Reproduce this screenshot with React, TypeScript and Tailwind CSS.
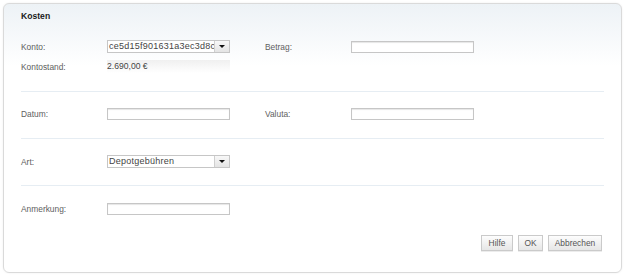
import React from "react";

const label = "w-[86px] shrink-0 text-[8.4px] leading-[12px] text-[#606060]";

function TextInput() {
  return (
    <div className="w-[123px] h-[12px] shrink-0 border border-[#c6c6c6] bg-white shadow-[inset_0_1px_1px_#e6e6e6]" />
  );
}

function Select({ value }: { value: string }) {
  return (
    <div className="flex w-[123px] h-[13px] shrink-0 border border-[#c6c6c6] bg-white">
      <div className="flex-1 overflow-hidden whitespace-nowrap pl-[1px] text-[9px] tracking-[0.25px] leading-[11px] text-[#444]">
        {value}
      </div>
      <div className="flex w-[15px] items-center justify-center border-l border-[#cfcfcf] bg-gradient-to-b from-[#f8f8f8] to-[#e4e4e4]">
        <div className="h-0 w-0 border-x-[3px] border-t-[3px] border-x-transparent border-t-[#111]" />
      </div>
    </div>
  );
}

function Btn({ children, w }: { children: React.ReactNode; w: string }) {
  return (
    <button
      className={`${w} h-[16px] border border-[#cacaca] bg-gradient-to-b from-[#fdfdfd] to-[#e6e6e6] text-[8.4px] leading-[14px] text-[#555] shadow-[0_1px_0_#ececec]`}
    >
      {children}
    </button>
  );
}

function Divider() {
  return <div className="h-px bg-[#e6edf3]" />;
}

export default function App() {
  return (
    <div className="h-[276px] w-[625px] bg-white p-[3px] font-['Liberation_Sans',Arial,sans-serif]">
      <div className="h-[270px] w-[619px] rounded-[6px] border border-[#dadada] bg-[linear-gradient(to_bottom,#edf2f6,#ffffff_62px)] px-[17px] shadow-[0_0_2px_#ececec]">
        <div className="h-[24px] pt-[7px] text-[8.6px] font-bold leading-[11px] text-[#1a1a1a]">
          Kosten
        </div>

        <div className="pt-[12px]">
          <div className="flex h-[13px] items-center">
            <span className={label}>Konto:</span>
            <Select value="ce5d15f901631a3ec3d8cc" />
            <span className={`${label} ml-[35px]`}>Betrag:</span>
            <TextInput />
          </div>
          <div className="mt-[7px] flex h-[13px] items-center">
            <span className={label}>Kontostand:</span>
            <div className="w-[123px] h-[13px] bg-gradient-to-b from-[#f0f0f0] to-white/0 text-[8.6px] leading-[13px] text-[#444]">
              2.690,00 €
            </div>
          </div>
          <div className="mt-[18px]">
            <Divider />
          </div>
        </div>

        <div className="pt-[16px]">
          <div className="flex h-[12px] items-center">
            <span className={label}>Datum:</span>
            <TextInput />
            <span className={`${label} ml-[35px]`}>Valuta:</span>
            <TextInput />
          </div>
          <div className="mt-[18px]">
            <Divider />
          </div>
        </div>

        <div className="pt-[16px]">
          <div className="flex h-[13px] items-center">
            <span className={label}>Art:</span>
            <Select value="Depotgebühren" />
          </div>
          <div className="mt-[17px]">
            <Divider />
          </div>
        </div>

        <div className="pt-[17px]">
          <div className="flex h-[12px] items-center">
            <span className={label}>Anmerkung:</span>
            <TextInput />
          </div>
        </div>

        <div className="mt-[20px] flex justify-end gap-[5px] pr-[2px]">
          <Btn w="w-[32px]">Hilfe</Btn>
          <Btn w="w-[25px]">OK</Btn>
          <Btn w="w-[54px]">Abbrechen</Btn>
        </div>
      </div>
    </div>
  );
}
